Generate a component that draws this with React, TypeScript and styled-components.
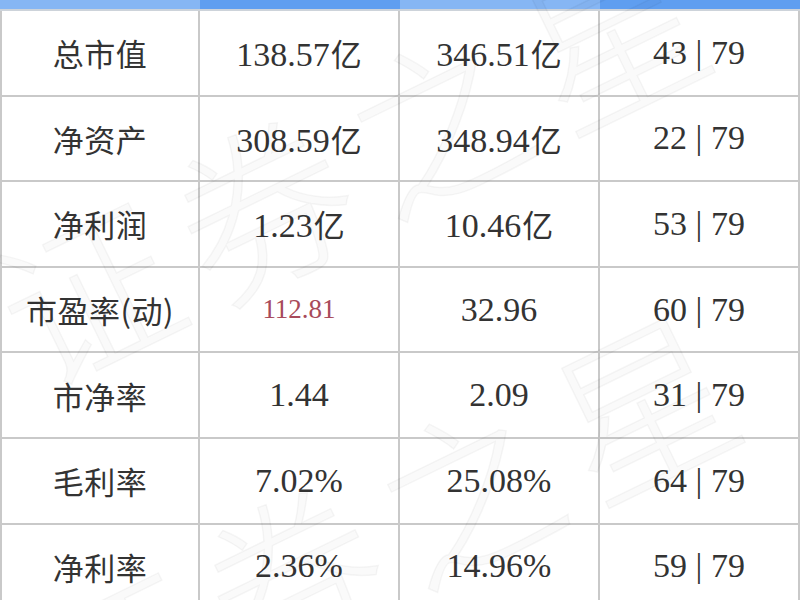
import React from "react";
import styled, { createGlobalStyle } from "styled-components";

type Row = { label: string; a: string; b: string; rank: string; hot?: boolean };

const rows: Row[] = [
  { label: "总市值", a: "138.57亿", b: "346.51亿", rank: "43 | 79" },
  { label: "净资产", a: "308.59亿", b: "348.94亿", rank: "22 | 79" },
  { label: "净利润", a: "1.23亿", b: "10.46亿", rank: "53 | 79" },
  { label: "市盈率(动)", a: "112.81", b: "32.96", rank: "60 | 79", hot: true },
  { label: "市净率", a: "1.44", b: "2.09", rank: "31 | 79" },
  { label: "毛利率", a: "7.02%", b: "25.08%", rank: "64 | 79" },
  { label: "净利率", a: "2.36%", b: "14.96%", rank: "59 | 79" },
];

const GlobalStyle = createGlobalStyle`
  html, body {
    margin: 0;
    padding: 0;
    background: #ffffff;
    overflow: hidden;
  }
`;

const Page = styled.div`
  position: relative;
  width: 800px;
  height: 600px;
  overflow: hidden;
  background: #ffffff;
`;

const HeadRow = styled.div`
  display: grid;
  grid-template-columns: repeat(4, 200px);
`;

const HeadStrip = styled.div<{ $light?: boolean }>`
  height: 9px;
  background: ${(p) => (p.$light ? "#86b6f4" : "#5f9ef0")};
  border-bottom: 2px solid #cdd3da;
`;

const Grid = styled.div`
  display: grid;
  grid-template-columns: repeat(4, 200px);
  grid-auto-rows: 85.6px;
`;

const Cell = styled.div<{ $first?: boolean }>`
  box-sizing: border-box;
  display: flex;
  align-items: center;
  justify-content: center;
  border-right: 2px solid #c9c9c9;
  border-bottom: 2px solid #c9c9c9;
  border-left: ${(p) => (p.$first ? "2px solid #c9c9c9" : "none")};
  color: #333333;
  white-space: nowrap;
`;

const Label = styled.span`
  font-family: "Noto Sans CJK SC", "Noto Sans", sans-serif;
  font-size: 31px;
  color: #333333;
  letter-spacing: 0.5px;
`;

const Num = styled.span<{ $hot?: boolean }>`
  font-family: "Liberation Serif", "Noto Sans CJK SC", serif;
  font-size: ${(p) => (p.$hot ? "27px" : "34px")};
  color: ${(p) => (p.$hot ? "#a84a5a" : "#333333")};
`;

const Unit = styled.span`
  font-family: "Noto Sans CJK SC", sans-serif;
  font-size: 31px;
  margin-left: 1px;
`;

const Watermark = styled.div<{ $top: number; $left: number }>`
  position: absolute;
  top: ${(p) => p.$top}px;
  left: ${(p) => p.$left}px;
  font-family: "Noto Sans CJK SC", sans-serif;
  font-size: 175px;
  font-weight: 300;
  letter-spacing: 20px;
  color: rgba(0, 0, 0, 0.02);
  -webkit-text-stroke: 1.5px rgba(0, 0, 0, 0.04);
  transform: rotate(-26deg);
  transform-origin: left top;
  white-space: nowrap;
  pointer-events: none;
`;

const renderValue = (v: string, hot?: boolean) => {
  const unit = v.endsWith("亿");
  return (
    <Num $hot={hot}>
      {unit ? v.slice(0, -1) : v}
      {unit && <Unit>亿</Unit>}
    </Num>
  );
};

export default function App() {
  return (
    <Page>
      <GlobalStyle />
      <HeadRow>
        <HeadStrip $light />
        <HeadStrip />
        <HeadStrip $light />
        <HeadStrip />
      </HeadRow>
      <Grid>
        {rows.map((r) => (
          <React.Fragment key={r.label}>
            <Cell $first>
              <Label>{r.label}</Label>
            </Cell>
            <Cell>{renderValue(r.a, r.hot)}</Cell>
            <Cell>{renderValue(r.b)}</Cell>
            <Cell>
              <Num>{r.rank}</Num>
            </Cell>
          </React.Fragment>
        ))}
      </Grid>
      <Watermark $top={210} $left={-50}>证券之星</Watermark>
      <Watermark $top={580} $left={-20}>证券之星</Watermark>
    </Page>
  );
}
